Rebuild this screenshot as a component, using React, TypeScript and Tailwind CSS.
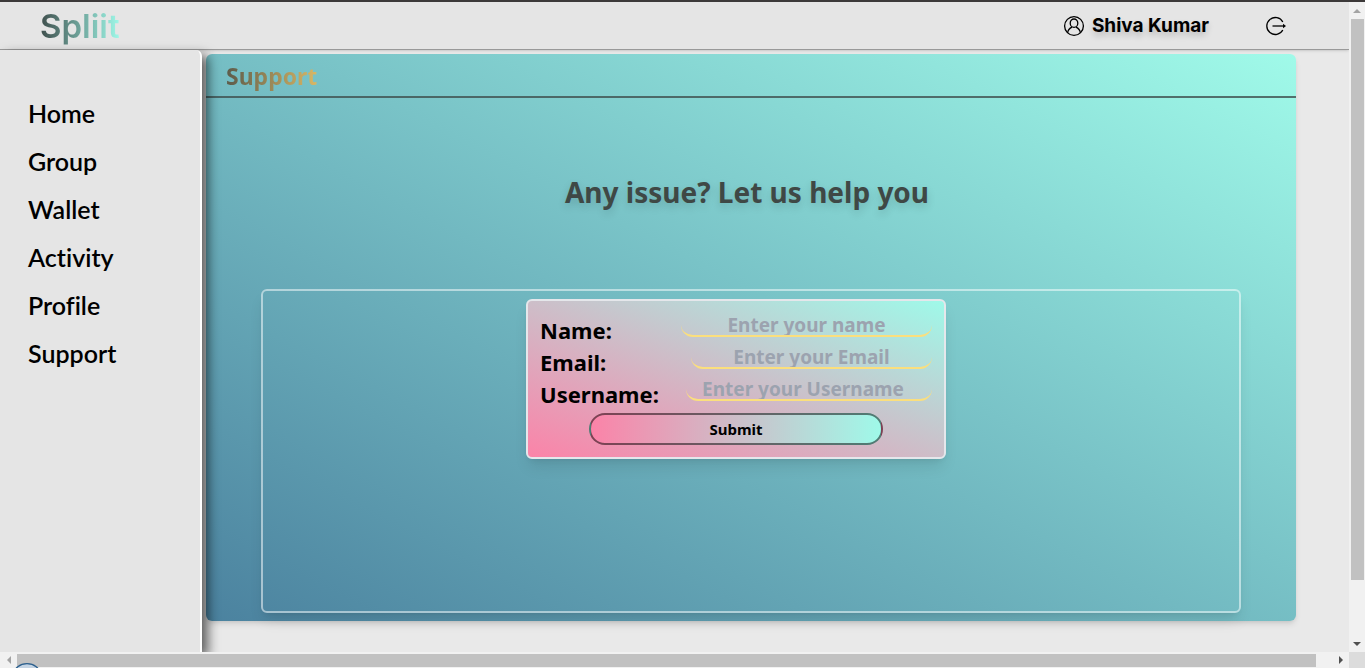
import React from "react";

const navItems = ["Home", "Group", "Wallet", "Activity", "Profile", "Support"];

const fields = [
  { id: "name", label: "Name:", placeholder: "Enter your name", size: "w-[251px]" },
  { id: "email", label: "Email:", placeholder: "Enter your Email", size: "w-[241px]" },
  { id: "username", label: "Username:", placeholder: "Enter your Username", size: "w-[246px] pr-3" },
];

function UserIcon() {
  return (
    <svg viewBox="0 0 22 22" className="size-[22px]" fill="none" stroke="#000" strokeWidth="1.3" aria-hidden="true">
      <circle cx="11" cy="11" r="9.4" />
      <ellipse cx="11" cy="8.2" rx="3.8" ry="4.2" />
      <path d="M4.6 18 C5 14.8 6.8 13.2 9 12.2 M17.4 18 C17 14.8 15.2 13.2 13 12.2" />
    </svg>
  );
}

function LogoutIcon() {
  return (
    <svg viewBox="0 0 22 22" className="size-[22px]" fill="none" stroke="#000" strokeWidth="1.3" aria-hidden="true">
      <path d="M17.8 7 A8.5 8.5 0 1 0 17.8 15" />
      <path d="M7.5 11 H18" />
      <path d="M18 8.8 L21 11 L18 13.2 Z" fill="#000" stroke="none" />
    </svg>
  );
}

function Header() {
  return (
    <header className="flex h-12 shrink-0 items-center justify-between border-b border-[#999] bg-[#e5e5e5] pr-[62px] pl-10 shadow-sm">
      <a
        href="#"
        className="bg-linear-to-r/srgb from-[#3f4f4d] to-[#9ff9e9] bg-clip-text font-[Inter,sans-serif] text-[33px] leading-10 font-semibold text-transparent"
      >
        Spliit
      </a>
      <div className="flex items-center gap-14">
        <a href="#" className="flex items-center gap-[7px] font-[Inter,sans-serif] text-[19px] leading-6 font-bold text-black text-shadow-[0_4px_6px_rgba(0,0,0,0.2)]">
          <UserIcon />
          Shiva Kumar
        </a>
        <button type="button" aria-label="Log out">
          <LogoutIcon />
        </button>
      </div>
    </header>
  );
}

function Sidebar() {
  return (
    <nav className="relative w-[202px] shrink-0 rounded-tr-md border-r-2 border-white bg-[#e5e5e5] pt-[39px] pl-7 shadow-[6px_5px_12px_rgba(0,0,0,0.6)]">
      <ul>
        {navItems.map((item) => (
          <li key={item} className="flex h-12 items-center">
            <a href="#" className="font-[Lato,sans-serif] text-[25px] leading-8 font-semibold text-black [font-variant-ligatures:none]">
              {item}
            </a>
          </li>
        ))}
      </ul>
    </nav>
  );
}

function SupportForm() {
  return (
    <form className="flex w-[420px] flex-col rounded-md border-2 border-[#e5e7eb] bg-linear-to-tr/srgb from-[#fb83a8] to-[#9ff9e9] px-3 py-3 font-['Noto_Sans',sans-serif] shadow-lg">
      {fields.map((field) => (
        <div key={field.id} className="flex h-8 items-start justify-between">
          <label htmlFor={field.id} className="text-[22px] leading-[34px] font-bold text-black">
            {field.label}
          </label>
          <input
            id={field.id}
            type="text"
            placeholder={field.placeholder}
            className={`${field.size} h-6 rounded-xl border-b-2 border-[#fbdf7d] bg-transparent pt-0.5 text-center text-[19px] leading-6 font-bold outline-none placeholder:text-[#9ca3af]`}
          />
        </div>
      ))}
      <button
        type="submit"
        className="mt-1 h-8 w-[294px] self-center rounded-full border-2 border-black/50 bg-linear-to-r/srgb from-[#fb83a8] to-[#9ff9e9] text-[15px] leading-6 font-bold text-black"
      >
        Submit
      </button>
    </form>
  );
}

function SupportPanel() {
  return (
    <main className="mt-1 mr-[53px] mb-[31px] ml-1 flex flex-1 flex-col rounded-md bg-linear-to-tr/srgb from-[#4b829f] to-[#a0fae9] font-['Noto_Sans',sans-serif] shadow-md">
      <div className="flex h-11 shrink-0 items-center border-b-2 border-[#3f4f4d]/80 pt-0.5 pl-5">
        <h1 className="bg-linear-to-r/srgb from-[#5c5b4b] to-[#d9b765] bg-clip-text text-[23px] leading-8 font-bold text-transparent">
          Support
        </h1>
      </div>
      <h2 className="mt-[74px] pr-2 text-center text-[28px] leading-10 font-bold text-[#3f4845] text-shadow-[0_4px_8px_rgba(0,0,0,0.15)]">
        Any issue? Let us help you
      </h2>
      <section className="mx-[55px] mt-[77px] mb-2 flex flex-1 items-start justify-center rounded-md border-2 border-white/50 pt-2 pr-[30px] shadow-lg">
        <SupportForm />
      </section>
    </main>
  );
}

function VerticalScrollbar() {
  return (
    <div className="flex w-4 shrink-0 flex-col items-center bg-[#f1f1f1]" aria-hidden="true">
      <div className="flex h-[17px] items-center">
        <svg viewBox="0 0 8 4" className="h-1 w-2" fill="#a3a3a3"><path d="M0 4 L4 0 L8 4 Z" /></svg>
      </div>
      <div className="flex w-full flex-1 flex-col items-center">
        <div className="h-[91%] w-[13px] bg-[#c1c1c1]" />
      </div>
      <div className="flex h-[17px] items-center">
        <svg viewBox="0 0 8 4" className="h-1 w-2" fill="#505050"><path d="M0 0 L4 4 L8 0 Z" /></svg>
      </div>
    </div>
  );
}

function HorizontalScrollbar() {
  return (
    <div className="flex h-4 shrink-0 bg-[#f1f1f1]" aria-hidden="true">
      <div className="relative flex w-[17px] items-center justify-center">
        <svg viewBox="0 0 4 8" className="h-2 w-1" fill="#a3a3a3"><path d="M4 0 L0 4 L4 8 Z" /></svg>
        <svg viewBox="0 0 24 5" className="absolute bottom-0 left-[15px] h-[5px] w-6">
          <ellipse cx="12" cy="11" rx="13" ry="10.3" fill="#c3d3e3" stroke="#2b5f8d" strokeWidth="1.3" />
        </svg>
      </div>
      <div className="flex flex-1 items-center pr-4">
        <div className="h-[13px] w-full bg-[#c1c1c1]" />
      </div>
      <div className="flex w-[17px] items-center justify-center">
        <svg viewBox="0 0 4 8" className="h-2 w-1" fill="#505050"><path d="M0 0 L4 4 L0 8 Z" /></svg>
      </div>
      <div className="w-4 bg-[#dcdcdc]" />
    </div>
  );
}

export default function App() {
  return (
    <div className="flex h-screen flex-col overflow-hidden border-t-2 border-[#3c3939] bg-[#e9e9e9]">
      <div className="flex min-h-0 flex-1">
        <div className="flex min-w-0 flex-1 flex-col overflow-hidden">
          <Header />
          <div className="flex min-h-0 flex-1 flex-row-reverse">
            <SupportPanel />
            <Sidebar />
          </div>
        </div>
        <VerticalScrollbar />
      </div>
      <HorizontalScrollbar />
    </div>
  );
}
